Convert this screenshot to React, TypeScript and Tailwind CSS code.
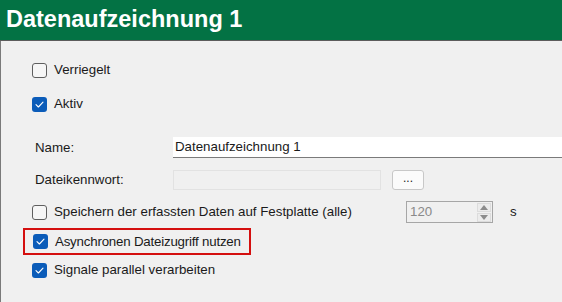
import React from "react";

function CheckBox({ checked }: { checked?: boolean }) {
  if (checked) {
    return (
      <span className="flex h-[15px] w-[15px] shrink-0 items-center justify-center rounded-[3px] bg-[#0b5cb9]">
        <svg width="9" height="7" viewBox="0 0 9 7" fill="none" stroke="white" strokeWidth="1.1" strokeLinecap="round" strokeLinejoin="round">
          <path d="M1 3.6 L3.4 6 L8 1.2" />
        </svg>
      </span>
    );
  }
  return <span className="h-[15px] w-[15px] shrink-0 rounded-[3px] border border-[#5f5f5f] bg-[#f6f6f6]" />;
}

function CheckRow({ label, checked }: { label: string; checked?: boolean }) {
  return (
    <div className="flex h-[20px] items-center gap-[7px] whitespace-nowrap pl-[31px]">
      <CheckBox checked={checked} />
      <span>{label}</span>
    </div>
  );
}

export default function App() {
  return (
    <div
      className="h-[302px] w-[562px] overflow-hidden bg-[#f0f0f0] text-[13.3px] text-[#1a1a1a]"
      style={{ fontFamily: '"Liberation Sans", Arial, sans-serif' }}
    >
      <div className="flex h-[41px] items-center border-b border-[#5c5c5c] bg-[#037244] pl-[6px]">
        <h1 className="text-[23.5px] font-bold leading-none text-white">Datenaufzeichnung 1</h1>
      </div>

      <div className="flex h-[261px] flex-col border-l border-[#7a7a7a] pt-[19px]">
        <CheckRow label="Verriegelt" />
        <div className="mt-[14px]">
          <CheckRow label="Aktiv" checked />
        </div>

        <div className="mt-[23px] flex h-[21px] items-center pl-[34px]">
          <span className="w-[138px]">Name:</span>
          <div className="flex h-full flex-1 items-center border-b border-[#7a7a7a] bg-white pl-[2px]">
            Datenaufzeichnung 1
          </div>
        </div>

        <div className="mt-[12px] flex h-[20px] items-center pl-[34px]">
          <span className="w-[138px]">Dateikennwort:</span>
          <div className="h-full w-[208px] border border-[#e2e2e2] bg-[#f0f0f0]" />
          <button className="ml-[11px] flex h-full w-[32px] items-center justify-center rounded-[3px] border border-[#c8c8c8] bg-[#fbfbfb] pb-[4px] text-[12px]">
            ...
          </button>
        </div>

        <div className="mt-[11px] flex h-[22px] items-center">
          <div className="flex w-[405px] items-center gap-[7px] whitespace-nowrap pl-[31px]">
            <CheckBox />
            <span>Speichern der erfassten Daten auf Festplatte (alle)</span>
          </div>
          <div className="flex h-full w-[87px] items-center justify-between border border-[#a6a6a6] bg-[#f0f0f0] pl-[3px] pr-[1px] text-[#8a8a8a]">
            <span>120</span>
            <div className="flex h-full flex-col justify-center gap-[1px]">
              <div className="flex h-[9px] w-[14px] items-center justify-center border border-[#dcdcdc] bg-[#ececec]">
                <svg width="8" height="5" viewBox="0 0 8 5"><path d="M0 5 L4 0 L8 5 Z" fill="#8c8c8c" /></svg>
              </div>
              <div className="flex h-[9px] w-[14px] items-center justify-center border border-[#dcdcdc] bg-[#ececec]">
                <svg width="8" height="5" viewBox="0 0 8 5"><path d="M0 0 L8 0 L4 5 Z" fill="#8c8c8c" /></svg>
              </div>
            </div>
          </div>
          <span className="ml-[17px]">s</span>
        </div>

        <div className="ml-[22px] mt-[5px] flex h-[27px] w-[228px] items-center gap-[7px] whitespace-nowrap border-2 border-[#d40f0f] pl-[8px]">
          <CheckBox checked />
          <span className="tracking-[-0.2px]">Asynchronen Dateizugriff nutzen</span>
        </div>

        <div className="mt-[5px]">
          <CheckRow label="Signale parallel verarbeiten" checked />
        </div>
      </div>
    </div>
  );
}
